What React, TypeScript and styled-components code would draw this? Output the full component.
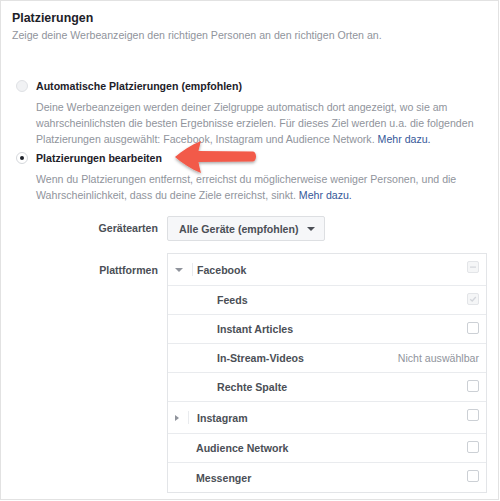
import React from "react";
import styled, { createGlobalStyle } from "styled-components";

const Global = createGlobalStyle`
  html, body { margin: 0; padding: 0; background: #fff; }
  body { font-family: "Liberation Sans", Arial, Helvetica, sans-serif; -webkit-font-smoothing: antialiased; }
  * { box-sizing: border-box; }
`;

const FS = "10.6px";

const Frame = styled.div`
  position: relative;
  width: 499px;
  height: 500px;
  border: 1px solid #e2e2e2;
  padding: 8px 11px 0 11px;
  background: #fff;
`;

const Title = styled.div`
  font-size: 12.4px;
  line-height: 18px;
  font-weight: 700;
  color: #1d2129;
`;

const Subtitle = styled.div`
  font-size: ${FS};
  line-height: 16px;
  color: #90949c;
  margin-top: 0px;
`;

const Options = styled.div`
  margin-top: 35px;
  display: flex;
  flex-direction: column;
`;

const OptionRow = styled.div<{ $mt?: number }>`
  position: relative;
  display: flex;
  align-items: center;
  gap: 8px;
  padding-left: 4px;
  margin-top: ${(p) => p.$mt ?? 0}px;
  height: 16px;
`;

const Radio = styled.span<{ $checked?: boolean }>`
  width: 12px;
  height: 12px;
  border-radius: 50%;
  border: 1px solid ${(p) => (p.$checked ? "#d5d8dc" : "#dfe1e5")};
  background: ${(p) => (p.$checked ? "#fff" : "#f1f2f4")};
  display: flex;
  align-items: center;
  justify-content: center;
  flex: none;
  &::after {
    content: "";
    display: ${(p) => (p.$checked ? "block" : "none")};
    width: 4px;
    height: 4px;
    border-radius: 50%;
    background: #1d2129;
  }
`;

const OptionLabel = styled.span`
  font-size: ${FS};
  line-height: 16px;
  font-weight: 700;
  color: #1d2129;
`;

const Desc = styled.p`
  margin: 5px 0 0 0;
  padding-left: 24px;
  padding-right: 6px;
  font-size: ${FS};
  line-height: 16px;
  color: #90949c;
`;

const Link = styled.a`
  color: #365899;
  text-decoration: none;
`;

const ArrowSvg = styled.svg`
  position: absolute;
  left: 146px;
  top: -14px;
  overflow: visible;
`;

const Form = styled.div`
  margin-top: 13px;
  display: grid;
  grid-template-columns: 146px 1fr;
  column-gap: 9px;
  row-gap: 12px;
  padding-right: 1px;
`;

const FieldLabel = styled.div<{ $pt: number }>`
  text-align: right;
  font-size: ${FS};
  line-height: 16px;
  font-weight: 700;
  color: #4b4f56;
  padding-top: ${(p) => p.$pt}px;
`;

const Dropdown = styled.button`
  justify-self: start;
  display: flex;
  align-items: center;
  gap: 8px;
  height: 25px;
  width: 158px;
  padding: 0 10px 0 11px;
  border: 1px solid #dddfe2;
  border-radius: 2px;
  background: #f6f7f9;
  font-family: inherit;
  font-size: ${FS};
  font-weight: 700;
  color: #4b4f56;
  white-space: nowrap;
`;

const Caret = styled.span<{ $dir: "down" | "right"; $color?: string }>`
  width: 0;
  height: 0;
  flex: none;
  ${(p) =>
    p.$dir === "down"
      ? `border-left: 4px solid transparent; border-right: 4px solid transparent; border-top: 4px solid ${p.$color ?? "#4b4f56"};`
      : `border-top: 3.5px solid transparent; border-bottom: 3.5px solid transparent; border-left: 4px solid ${p.$color ?? "#4b4f56"};`}
`;

const PlatformBox = styled.div`
  width: 320px;
  border: 1px solid #e3e5e8;
  display: flex;
  flex-direction: column;
`;

const Row = styled.div<{ $h: number; $indent: number }>`
  display: flex;
  align-items: center;
  height: ${(p) => p.$h}px;
  padding-left: ${(p) => p.$indent}px;
  padding-right: 7px;
  border-bottom: 1px solid #e9ebee;
  &:last-child { border-bottom: none; }
  flex: none;
`;

const Toggle = styled.div`
  display: flex;
  align-items: center;
  width: 29px;
  height: 100%;
  padding-left: 7px;
  flex: none;
`;

const Divider = styled.span`
  width: 1px;
  height: 13px;
  background: #e9ebee;
  margin-left: 9px;
`;

const RowLabel = styled.span`
  flex: 1;
  font-size: ${FS};
  line-height: 16px;
  font-weight: 700;
  color: #4b4f56;
`;

const Note = styled.span`
  font-size: ${FS};
  color: #90949c;
  line-height: 16px;
`;

const Check = styled.span<{ $disabled?: boolean }>`
  align-self: flex-start;
  margin-top: 7px;
  width: 12px;
  height: 12px;
  border: 1px solid ${(p) => (p.$disabled ? "#e3e5e8" : "#ccd0d5")};
  border-radius: 2px;
  background: ${(p) => (p.$disabled ? "#f5f6f7" : "#fff")};
  display: flex;
  align-items: center;
  justify-content: center;
  flex: none;
`;

type Item = {
  label: string;
  level: 0 | 1;
  caret?: "down" | "right";
  check?: "none" | "minus" | "tick";
  note?: string;
};

const items: Item[] = [
  { label: "Facebook", level: 0, caret: "down", check: "minus" },
  { label: "Feeds", level: 1, check: "tick" },
  { label: "Instant Articles", level: 1, check: "none" },
  { label: "In-Stream-Videos", level: 1, note: "Nicht auswählbar" },
  { label: "Rechte Spalte", level: 1, check: "none" },
  { label: "Instagram", level: 0, caret: "right", check: "none" },
  { label: "Audience Network", level: 0, check: "none" },
  { label: "Messenger", level: 0, check: "none" },
];

function CheckBox({ kind }: { kind: "none" | "minus" | "tick" }) {
  const disabled = kind !== "none";
  return (
    <Check $disabled={disabled}>
      {kind === "minus" && (
        <svg width="8" height="8" viewBox="0 0 8 8">
          <rect x="1" y="3.5" width="6" height="1.2" fill="#d3d6db" />
        </svg>
      )}
      {kind === "tick" && (
        <svg width="8" height="8" viewBox="0 0 8 8">
          <path d="M1.2 4.2 L3.2 6 L6.8 2" stroke="#d3d6db" strokeWidth="1.3" fill="none" />
        </svg>
      )}
    </Check>
  );
}

function Arrow() {
  return (
    <ArrowSvg width="100" height="50" viewBox="0 0 100 50">
      <defs>
        <filter id="sh" x="-20%" y="-30%" width="140%" height="170%">
          <feDropShadow dx="0" dy="1.5" stdDeviation="1.5" floodColor="#000" floodOpacity="0.35" />
        </filter>
      </defs>
      <path
        d="M17 21 C24 15 33 9 43 5 C42 9 41 12 40.5 15 L95 15.5 C99 16 99 25 95 25.5 L40.5 26 C41 29 42 33 43 37 C33 33 24 27 17 21 Z"
        fill="#f25a4a"
        filter="url(#sh)"
      />
    </ArrowSvg>
  );
}

export default function App() {
  return (
    <>
      <Global />
      <Frame>
        <Title>Platzierungen</Title>
        <Subtitle>Zeige deine Werbeanzeigen den richtigen Personen an den richtigen Orten an.</Subtitle>
        <Options>
          <OptionRow>
            <Radio />
            <OptionLabel>Automatische Platzierungen (empfohlen)</OptionLabel>
          </OptionRow>
          <Desc>
            Deine Werbeanzeigen werden deiner Zielgruppe automatisch dort angezeigt, wo sie am
            wahrscheinlichsten die besten Ergebnisse erzielen. Für dieses Ziel werden u.a. die folgenden
            Platzierungen ausgewählt: Facebook, Instagram und Audience Network. <Link>Mehr dazu.</Link>
          </Desc>
          <OptionRow $mt={3}>
            <Radio $checked />
            <OptionLabel>Platzierungen bearbeiten</OptionLabel>
            <Arrow />
          </OptionRow>
          <Desc>
            Wenn du Platzierungen entfernst, erreichst du möglicherweise weniger Personen, und die
            Wahrscheinlichkeit, dass du deine Ziele erreichst, sinkt. <Link>Mehr dazu.</Link>
          </Desc>
        </Options>
        <Form>
          <FieldLabel $pt={4}>Gerätearten</FieldLabel>
          <Dropdown>
            Alle Geräte (empfohlen)
            <Caret $dir="down" />
          </Dropdown>
          <FieldLabel $pt={9}>Plattformen</FieldLabel>
          <PlatformBox>
            {items.map((it) => (
              <Row key={it.label} $h={it.caret ? 32 : 29} $indent={it.caret ? 0 : it.level === 1 ? 49 : 28}>
                {it.caret && (
                  <Toggle>
                    <Caret $dir={it.caret} $color="#90949c" />
                    <Divider />
                  </Toggle>
                )}
                <RowLabel>{it.label}</RowLabel>
                {it.note ? <Note>{it.note}</Note> : <CheckBox kind={it.check ?? "none"} />}
              </Row>
            ))}
          </PlatformBox>
        </Form>
      </Frame>
    </>
  );
}
